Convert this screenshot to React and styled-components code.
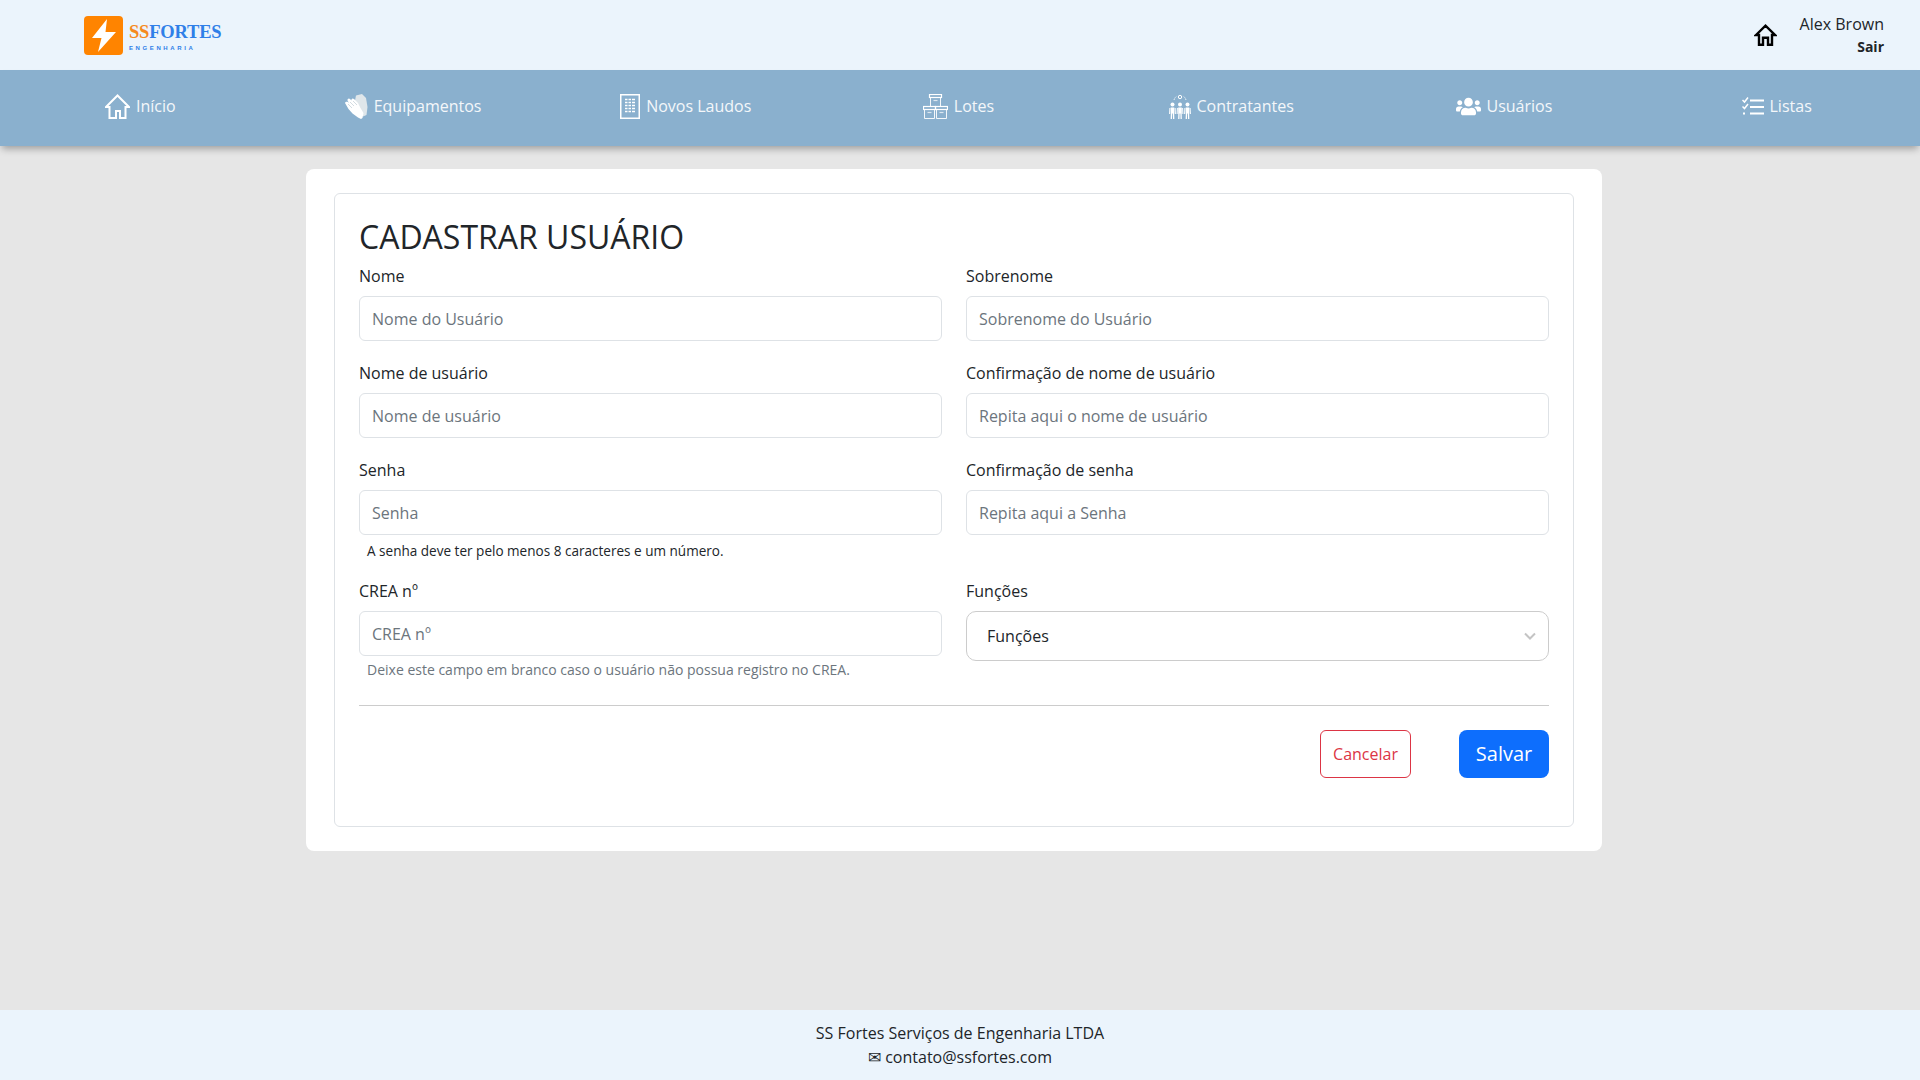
import React from 'react';
import styled, { createGlobalStyle } from 'styled-components';
import { FaUsers } from 'react-icons/fa';

const GlobalStyle = createGlobalStyle`
  * {
    box-sizing: border-box;
  }
  body {
    margin: 0;
    background: #e6e6e6;
    color: #212529;
    font-family: 'Open Sans', 'Noto Sans', sans-serif;
    font-size: 16px;
    line-height: 24px;
  }
`;

const HomeIcon = () => (
  <svg width="25" height="25" viewBox="0 0 25 25" fill="none" stroke="#fff" strokeWidth="2">
    <path d="M1 13 12.5 1.5 24 13h-3.5v11h-5.500v-7h-4v7H4.500V13z" strokeLinejoin="miter" />
  </svg>
);

const GlovesIcon = () => (
  <svg width="23" height="25" viewBox="0 0 23 25">
    <path d="M11 1.500 17 0l4 4 1.500 9-1 8-3.500 1.500L9 12z" fill="#dfe6ea" />
    <path
      d="M0 9c1-2 3-1 4 0L2.500 6.500C2 5 4 3.500 5 5l1.500 1.500C6 5 7.500 3.500 9 5l4 4 2.500 5 3 5-1 5-1.500 1-3-1.500-5.500-4-4-4.500z"
      fill="#fff"
    />
    <path d="M3 10l4 4M5 8l4 4M8 7l4 4" stroke="#c8d3da" strokeWidth=".8" />
  </svg>
);

const ReportIcon = () => (
  <svg width="20" height="25" viewBox="0 0 20 25">
    <rect x=".75" y=".75" width="18.500" height="23.500" fill="none" stroke="#fff" strokeWidth="1.500" />
    {[5, 8, 11, 14, 17].map((y) => (
      <path key={y} d={`M5 ${y + 0.5}h2.500M8.500 ${y + 0.5}h2.500M12 ${y + 0.5}h3`} stroke="#fff" strokeWidth="1.500" />
    ))}
  </svg>
);

const Box = ({ x, y }) => (
  <g fill="none" stroke="#fff">
    <rect x={x} y={y} width="12" height="3" strokeWidth="1.200" />
    <path d={`M${x + 1} ${y + 3}v9h10v-9`} strokeWidth=".9" />
    <path d={`M${x + 4} ${y + 6}h4`} strokeWidth="1.200" opacity=".7" />
  </g>
);

const BoxesIcon = () => (
  <svg width="25" height="25" viewBox="0 0 25 25">
    <Box x={6.5} y={.5} />
    <Box x={.5} y={12.5} />
    <Box x={12.5} y={12.5} />
  </svg>
);

const Person = ({ x }) => (
  <g fill="#fff" stroke="#fff">
    <circle cx={x} cy="10.500" r="2" stroke="none" />
    <rect x={x - 1.800} y="13.500" width="3.600" height="6" stroke="none" />
    <path d={`M${x - 2.600} 14l-.3 6M${x + 2.600} 14l.3 6`} strokeWidth="1" fill="none" />
    <path d={`M${x - 1} 19l-.2 6M${x + 1} 19l.2 6`} strokeWidth="1.300" fill="none" />
  </g>
);

const TeamIcon = () => (
  <svg width="22" height="25" viewBox="0 0 22 25">
    <Person x={3.500} />
    <Person x={18.500} />
    <Person x={11} />
    <circle cx="11" cy="3" r="1.700" fill="none" stroke="#fff" />
    <path d="M5 6c.5-2 1.500-3 3-4M17 6c-.5-2-1.500-3-3-4" fill="none" stroke="#fff" strokeWidth=".8" strokeDasharray="1.500 1" />
  </svg>
);

const ListIcon = () => (
  <svg width="22" height="18" viewBox="0 0 22 18" fill="none" stroke="#fff">
    <path d="M.5 3 2.500 5 6 .5M.5 9.500l2 2L6 7" strokeWidth="1.500" />
    <path d="M1 16.500h3" strokeWidth="2.200" strokeDasharray="2 1" />
    <path d="M8 3.500h14M8 10h14M8 16.500h14" strokeWidth="2" />
  </svg>
);

const navItems = [
  { label: 'Início', icon: <HomeIcon /> },
  { label: 'Equipamentos', icon: <GlovesIcon /> },
  { label: 'Novos Laudos', icon: <ReportIcon /> },
  { label: 'Lotes', icon: <BoxesIcon /> },
  { label: 'Contratantes', icon: <TeamIcon /> },
  { label: 'Usuários', icon: <FaUsers size={25} color="#fff" /> },
  { label: 'Listas', icon: <ListIcon /> },
];

const App = () => {
  return (
    <Page>
      <GlobalStyle />
      <Header>
        <Logo>
          <LogoMark>
            <svg width="24" height="33" viewBox="0 0 24 33">
              <path d="M15 0 0 19h9.500L6 33 24 13H13.500z" fill="#fff" />
            </svg>
          </LogoMark>
          <LogoText>
            <LogoName>
              <span>SS</span>FORTES
            </LogoName>
            <LogoSub>ENGENHARIA</LogoSub>
          </LogoText>
        </Logo>
        <UserArea>
          <svg width="23" height="22" viewBox="0 0 23 22" fill="none" stroke="#000" strokeWidth="2.400">
            <path d="M2 11 11.500 1.700 21 11h-3v9.800h-4v-7H9v7H5V11z" />
          </svg>
          <UserInfo>
            <UserName>Alex Brown</UserName>
            <Logout>Sair</Logout>
          </UserInfo>
        </UserArea>
      </Header>

      <Nav>
        {navItems.map((item) => (
          <NavItem key={item.label}>
            {item.icon}
            <span>{item.label}</span>
          </NavItem>
        ))}
      </Nav>

      <Main>
        <Panel>
          <Card>
            <Title>CADASTRAR USUÁRIO</Title>
            <Row>
              <Field>
                <Label>Nome</Label>
                <Input placeholder="Nome do Usuário" />
              </Field>
              <Field>
                <Label>Sobrenome</Label>
                <Input placeholder="Sobrenome do Usuário" />
              </Field>
            </Row>
            <Row>
              <Field>
                <Label>Nome de usuário</Label>
                <Input placeholder="Nome de usuário" />
              </Field>
              <Field>
                <Label>Confirmação de nome de usuário</Label>
                <Input placeholder="Repita aqui o nome de usuário" />
              </Field>
            </Row>
            <Row>
              <Field>
                <Label>Senha</Label>
                <Input type="password" placeholder="Senha" />
                <PasswordHint>A senha deve ter pelo menos 8 caracteres e um número.</PasswordHint>
              </Field>
              <Field>
                <Label>Confirmação de senha</Label>
                <Input type="password" placeholder="Repita aqui a Senha" />
              </Field>
            </Row>
            <Row>
              <Field>
                <Label>CREA nº</Label>
                <Input placeholder="CREA nº" />
                <MutedHint>Deixe este campo em branco caso o usuário não possua registro no CREA.</MutedHint>
              </Field>
              <Field>
                <Label>Funções</Label>
                <SelectBox>
                  Funções
                  <svg width="12" height="8" viewBox="0 0 12 8" fill="none" stroke="#c4c4c4" strokeWidth="2">
                    <path d="M1 1.500 6 6.500l5-5" />
                  </svg>
                </SelectBox>
              </Field>
            </Row>
            <Divider />
            <Actions>
              <CancelButton>Cancelar</CancelButton>
              <SaveButton>Salvar</SaveButton>
            </Actions>
          </Card>
        </Panel>
      </Main>

      <Footer>
        <div>SS Fortes Serviços de Engenharia LTDA</div>
        <div>✉ contato@ssfortes.com</div>
      </Footer>
    </Page>
  );
};

const Page = styled.div`
  min-height: 100vh;
  display: flex;
  flex-direction: column;
`;

const Header = styled.header`
  height: 70px;
  padding: 0 36px 0 84px;
  display: flex;
  justify-content: space-between;
  align-items: center;
  background: #ebf4fc;
`;

const Logo = styled.div`
  display: flex;
  align-items: center;
  gap: 6px;
`;

const LogoMark = styled.div`
  width: 39px;
  height: 39px;
  border-radius: 4px;
  background: #ff8400;
  display: flex;
  align-items: center;
  justify-content: center;
`;

const LogoText = styled.div`
  display: flex;
  flex-direction: column;
  padding-top: 5px;
`;

const LogoName = styled.div`
  font-family: 'Liberation Serif', serif;
  font-weight: 700;
  font-size: 18.500px;
  line-height: 18px;
  letter-spacing: -0.2px;
  color: #2f7fe8;

  span {
    color: #f58a1f;
  }
`;

const LogoSub = styled.div`
  font-family: 'Liberation Sans', sans-serif;
  font-weight: 700;
  font-size: 6px;
  line-height: 10px;
  margin-top: 2px;
  letter-spacing: 2.600px;
  color: #2f7fe8;
`;

const UserArea = styled.div`
  display: flex;
  align-items: center;
  gap: 23px;
`;

const UserInfo = styled.div`
  display: flex;
  flex-direction: column;
  align-items: flex-end;
`;

const UserName = styled.span`
  line-height: 24px;
`;

const Logout = styled.span`
  font-size: 14px;
  font-weight: 700;
  line-height: 22px;
`;

const Nav = styled.nav`
  height: 76px;
  padding: 0 7px 4px 4px;
  display: grid;
  grid-template-columns: repeat(7, 1fr);
  align-items: center;
  background: #8ab0ce;
  box-shadow: 0 5px 7px -2px rgba(0, 0, 0, 0.3);
  position: relative;
`;

const NavItem = styled.div`
  display: flex;
  justify-content: center;
  align-items: center;
  gap: 6px;
  color: #f4f7fa;
`;

const Main = styled.main`
  flex: 1;
  padding: 23px 318px 0 306px;
`;

const Panel = styled.section`
  padding: 24px 28px;
  border-radius: 8px;
  background: #fff;
`;

const Card = styled.div`
  padding: 24px 24px 48px;
  border: 1px solid #dee2e6;
  border-radius: 6px;
`;

const Title = styled.h2`
  margin: 0 0 8px;
  font-size: 32px;
  font-weight: 400;
  line-height: 38px;
`;

const Row = styled.div`
  display: grid;
  grid-template-columns: 1fr 1fr;
  column-gap: 24px;
  margin-bottom: 20px;
`;

const Field = styled.div`
  display: flex;
  flex-direction: column;
`;

const Label = styled.label`
  margin-bottom: 8px;
`;

const Input = styled.input`
  height: 45px;
  padding: 0 12px;
  border: 1px solid #dee2e6;
  border-radius: 6px;
  font: inherit;
  color: #212529;

  &::placeholder {
    color: #6c757d;
    opacity: 1;
  }
`;

const PasswordHint = styled.small`
  margin-top: 8px;
  padding-left: 8px;
  font-size: 13.550px;
  line-height: 16px;
  color: #212529;
`;

const MutedHint = styled.small`
  margin-top: 5px;
  padding-left: 8px;
  font-size: 14px;
  line-height: 18px;
  color: #6c757d;
`;

const SelectBox = styled.div`
  height: 50px;
  padding: 0 12px 0 20px;
  display: flex;
  justify-content: space-between;
  align-items: center;
  border: 1px solid #ccc;
  border-radius: 10px;
  background: #fff;
`;

const Divider = styled.hr`
  margin: 26px 0 24px;
  border: 0;
  border-top: 1px solid #ccc;
`;

const Actions = styled.div`
  display: flex;
  justify-content: flex-end;
  gap: 48px;
`;

const CancelButton = styled.button`
  height: 48px;
  width: 91px;
  padding: 0;
  border: 1px solid #dc3545;
  border-radius: 6px;
  background: #fff;
  color: #dc3545;
  font: inherit;
`;

const SaveButton = styled.button`
  height: 48px;
  width: 90px;
  padding: 0;
  border: 0;
  border-radius: 8px;
  background: #0d6efd;
  color: #fff;
  font: inherit;
  font-size: 20px;
`;

const Footer = styled.footer`
  height: 70px;
  padding-top: 11px;
  text-align: center;
  background: #ebf4fc;
`;

export default App;
